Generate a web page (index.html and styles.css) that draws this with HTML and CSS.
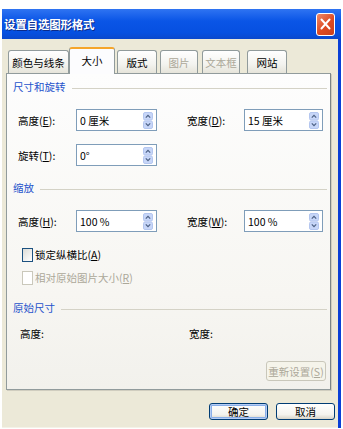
FILE: index.html
```html
<!DOCTYPE html>
<html lang="zh-CN">
<head>
<meta charset="utf-8">
<title>设置自选图形格式</title>
<link rel="stylesheet" href="styles.css">
</head>
<body>
<div class="window">
  <div class="titlebar">
    <span class="title">设置自选图形格式</span>
    <span class="close">
      <svg width="19" height="22" viewBox="0 0 19 22"><path d="M5 6 L14 16 M14 6 L5 16" stroke="#fff" stroke-width="2.2" stroke-linecap="round"/></svg>
    </span>
  </div>
  <div class="client">
    <div class="tabs">
      <div class="tab t1">颜色与线条</div>
      <div class="tab t2 active">大小</div>
      <div class="tab t3">版式</div>
      <div class="tab t4 disabled">图片</div>
      <div class="tab t5 disabled">文本框</div>
      <div class="tab t6">网站</div>
    </div>
    <div class="panel">
      <div class="group g1"><span class="gtext">尺寸和旋转</span><span class="gline"></span></div>
      <div class="grid r1">
        <span class="lbl">高度(<u>E</u>):</span>
        <div class="field"><span class="val">0 厘米</span><span class="spin"><svg width="10" height="17" viewBox="0 0 10 17"><rect x="0.5" y="0.5" width="9" height="7.5" rx="1.5" fill="#c7d6f8" stroke="#b4c6ef"/><rect x="0.5" y="9" width="9" height="7.5" rx="1.5" fill="#c7d6f8" stroke="#b4c6ef"/><path d="M2.8 5.6 L5 3.3 L7.2 5.6" fill="none" stroke="#4d6185" stroke-width="1.2"/><path d="M2.8 11.4 L5 13.7 L7.2 11.4" fill="none" stroke="#4d6185" stroke-width="1.2"/></svg></span></div>
        <span></span>
        <span class="lbl">宽度(<u>D</u>):</span>
        <div class="field"><span class="val">15 厘米</span><span class="spin"><svg width="10" height="17" viewBox="0 0 10 17"><rect x="0.5" y="0.5" width="9" height="7.5" rx="1.5" fill="#c7d6f8" stroke="#b4c6ef"/><rect x="0.5" y="9" width="9" height="7.5" rx="1.5" fill="#c7d6f8" stroke="#b4c6ef"/><path d="M2.8 5.6 L5 3.3 L7.2 5.6" fill="none" stroke="#4d6185" stroke-width="1.2"/><path d="M2.8 11.4 L5 13.7 L7.2 11.4" fill="none" stroke="#4d6185" stroke-width="1.2"/></svg></span></div>
      </div>
      <div class="grid r2">
        <span class="lbl">旋转(<u>T</u>):</span>
        <div class="field"><span class="val">0°</span><span class="spin"><svg width="10" height="17" viewBox="0 0 10 17"><rect x="0.5" y="0.5" width="9" height="7.5" rx="1.5" fill="#c7d6f8" stroke="#b4c6ef"/><rect x="0.5" y="9" width="9" height="7.5" rx="1.5" fill="#c7d6f8" stroke="#b4c6ef"/><path d="M2.8 5.6 L5 3.3 L7.2 5.6" fill="none" stroke="#4d6185" stroke-width="1.2"/><path d="M2.8 11.4 L5 13.7 L7.2 11.4" fill="none" stroke="#4d6185" stroke-width="1.2"/></svg></span></div>
      </div>
      <div class="group g2"><span class="gtext">缩放</span><span class="gline"></span></div>
      <div class="grid r3">
        <span class="lbl">高度(<u>H</u>):</span>
        <div class="field"><span class="val">100 %</span><span class="spin"><svg width="10" height="17" viewBox="0 0 10 17"><rect x="0.5" y="0.5" width="9" height="7.5" rx="1.5" fill="#c7d6f8" stroke="#b4c6ef"/><rect x="0.5" y="9" width="9" height="7.5" rx="1.5" fill="#c7d6f8" stroke="#b4c6ef"/><path d="M2.8 5.6 L5 3.3 L7.2 5.6" fill="none" stroke="#4d6185" stroke-width="1.2"/><path d="M2.8 11.4 L5 13.7 L7.2 11.4" fill="none" stroke="#4d6185" stroke-width="1.2"/></svg></span></div>
        <span></span>
        <span class="lbl">宽度(<u>W</u>):</span>
        <div class="field"><span class="val">100 %</span><span class="spin"><svg width="10" height="17" viewBox="0 0 10 17"><rect x="0.5" y="0.5" width="9" height="7.5" rx="1.5" fill="#c7d6f8" stroke="#b4c6ef"/><rect x="0.5" y="9" width="9" height="7.5" rx="1.5" fill="#c7d6f8" stroke="#b4c6ef"/><path d="M2.8 5.6 L5 3.3 L7.2 5.6" fill="none" stroke="#4d6185" stroke-width="1.2"/><path d="M2.8 11.4 L5 13.7 L7.2 11.4" fill="none" stroke="#4d6185" stroke-width="1.2"/></svg></span></div>
      </div>
      <div class="check c1"><span class="box"></span><span>锁定纵横比(<u>A</u>)</span></div>
      <div class="check c2 off"><span class="box"></span><span>相对原始图片大小(<u>R</u>)</span></div>
      <div class="group g3"><span class="gtext">原始尺寸</span><span class="gline"></span></div>
      <div class="grid r4">
        <span class="lbl">高度:</span>
        <span></span>
        <span></span>
        <span class="lbl">宽度:</span>
        <span></span>
      </div>
      <div class="resetrow"><span class="reset">重新设置(<u>S</u>)</span></div>
    </div>
    <div class="buttons">
      <span class="btn default">确定</span>
      <span class="btn">取消</span>
    </div>
  </div>
</div>
</body>
</html>
```
FILE: styles.css
```css
* { box-sizing: border-box; }
html, body { margin: 0; padding: 0; background: #fff; }
body {
  font-family: "Noto Sans CJK SC", "Liberation Sans", sans-serif;
  font-size: 10.5px;
  color: #000;
  width: 343px;
  height: 429px;
  overflow: hidden;
}
u { text-decoration: underline; }
.window {
  margin: 9px 0 0 2px;
  width: 339px;
  height: 419px;
  border-right: 3px solid #0a3fd6;
  background: #ece9d8;
  display: flex;
  flex-direction: column;
}
.titlebar {
  height: 30px;
  background: linear-gradient(#2f74f2, #0a55e6 40%, #0650e0 80%, #0a48cc);
  display: flex;
  align-items: center;
  justify-content: space-between;
  padding: 0 3px 0 2px;
  margin-right: -3px;
}
.title {
  color: #fff;
  font-weight: bold;
  font-size: 11.5px;
  letter-spacing: -0.2px;
  text-shadow: 1px 1px 0 #0a2a8a;
}
.close {
  width: 19px;
  height: 23px;
  border: 1px solid #fff;
  border-radius: 3px;
  background: linear-gradient(135deg, #f08a6a, #dd4a22 55%, #c8401c);
  display: flex;
  align-items: center;
  justify-content: center;
  margin-right: 3px;
}
.close svg { display: block; }
.client {
  flex: 1;
  display: flex;
  flex-direction: column;
  padding: 8px 0 0 4px;
  border-bottom: 1px solid #f4f2e8;
}
.tabs {
  display: flex;
  align-items: flex-end;
  height: 26px;
  padding-left: 2px;
  position: relative;
  z-index: 1;
}
.tab {
  height: 23px;
  border: 1px solid #919b9c;
  border-bottom: none;
  border-radius: 3px 3px 0 0;
  background: linear-gradient(#ffffff, #f3f3ef 60%, #e6e4da);
  display: flex;
  align-items: center;
  justify-content: center;
  white-space: nowrap;
}
.tab.active {
  height: 26px;
  border-top: 2px solid #f5a52c;
  background: #fcfcfe;
  padding-bottom: 2px;
  margin-bottom: -1px;
  height: 27px;
}
.tab.disabled { color: #aca899; }
.t1 { width: 61px; }
.t2 { width: 46px; }
.t3 { width: 40px; margin-left: 2px; }
.t4 { width: 38px; margin-left: 3px; }
.t5 { width: 38px; margin-left: 4px; }
.t6 { width: 40px; margin-left: 7px; }
.panel {
  width: 325px;
  height: 317px;
  border: 1px solid #919b9c;
  border-right-color: #7c8485;
  background: linear-gradient(#fdfdfd, #f7f6f2 70%, #f2f1ec);
  display: flex;
  flex-direction: column;
  padding: 6px 3px 0 6px;
  box-shadow: 1px 1px 0 #d0cdbf;
}
.group {
  display: flex;
  align-items: center;
  height: 14px;
  line-height: 14px;
}
.gtext { color: #2553cc; white-space: nowrap; }
.gline {
  flex: 1;
  height: 1px;
  background: #d4d2c6;
  margin: 2px 0 0 6px;
}
.g2 { margin-top: 15px; }
.g3 { margin-top: 16px; }
.grid {
  display: grid;
  grid-template-columns: 58px 81px 30px 57px 79px;
  align-items: center;
  padding-left: 5px;
}
.r1 { margin-top: 15px; }
.r2 { margin-top: 13px; }
.r3 { margin-top: 15px; }
.r4 { margin-top: 11px; padding-left: 7px; height: 14px; }
.lbl { white-space: nowrap; }
.field {
  height: 22px;
  border: 1px solid #7f9db9;
  background: #fff;
  display: flex;
  align-items: center;
  justify-content: space-between;
  padding: 0 3px 0 3px;
}
.spin { display: flex; }
.spin svg { display: block; }
.check {
  display: flex;
  align-items: center;
  gap: 2px;
  padding-left: 9px;
  height: 15px;
  white-space: nowrap;
}
.c1 { margin-top: 15px; }
.c2 { margin-top: 8px; }
.box {
  width: 11px;
  height: 14px;
  border: 1px solid #1c5180;
  background: linear-gradient(135deg, #dcdcd7, #fff);
}
.check.off { color: #aca899; }
.check.off .box { border-color: #cac8bb; background: #fff; }
.resetrow {
  display: flex;
  justify-content: flex-end;
  margin-top: 21px;
  padding-right: 1px;
}
.reset {
  width: 60px;
  height: 20px;
  border: 1px solid #c9c7ba;
  border-radius: 3px;
  background: #f5f4ea;
  color: #aca899;
  display: flex;
  align-items: center;
  justify-content: center;
  white-space: nowrap;
}
.buttons {
  display: flex;
  justify-content: flex-end;
  gap: 8px;
  margin-top: 13px;
  padding-right: 3px;
}
.btn {
  width: 59px;
  height: 17px;
  border: 1px solid #003c74;
  border-radius: 3px;
  background: linear-gradient(#ffffff, #f4f3ee 70%, #d8d4c8);
  display: flex;
  align-items: center;
  justify-content: center;
}
.btn.default {
  box-shadow: inset 0 0 0 1px #b6cdf4, inset 0 0 0 2px #89aee8;
}
```
